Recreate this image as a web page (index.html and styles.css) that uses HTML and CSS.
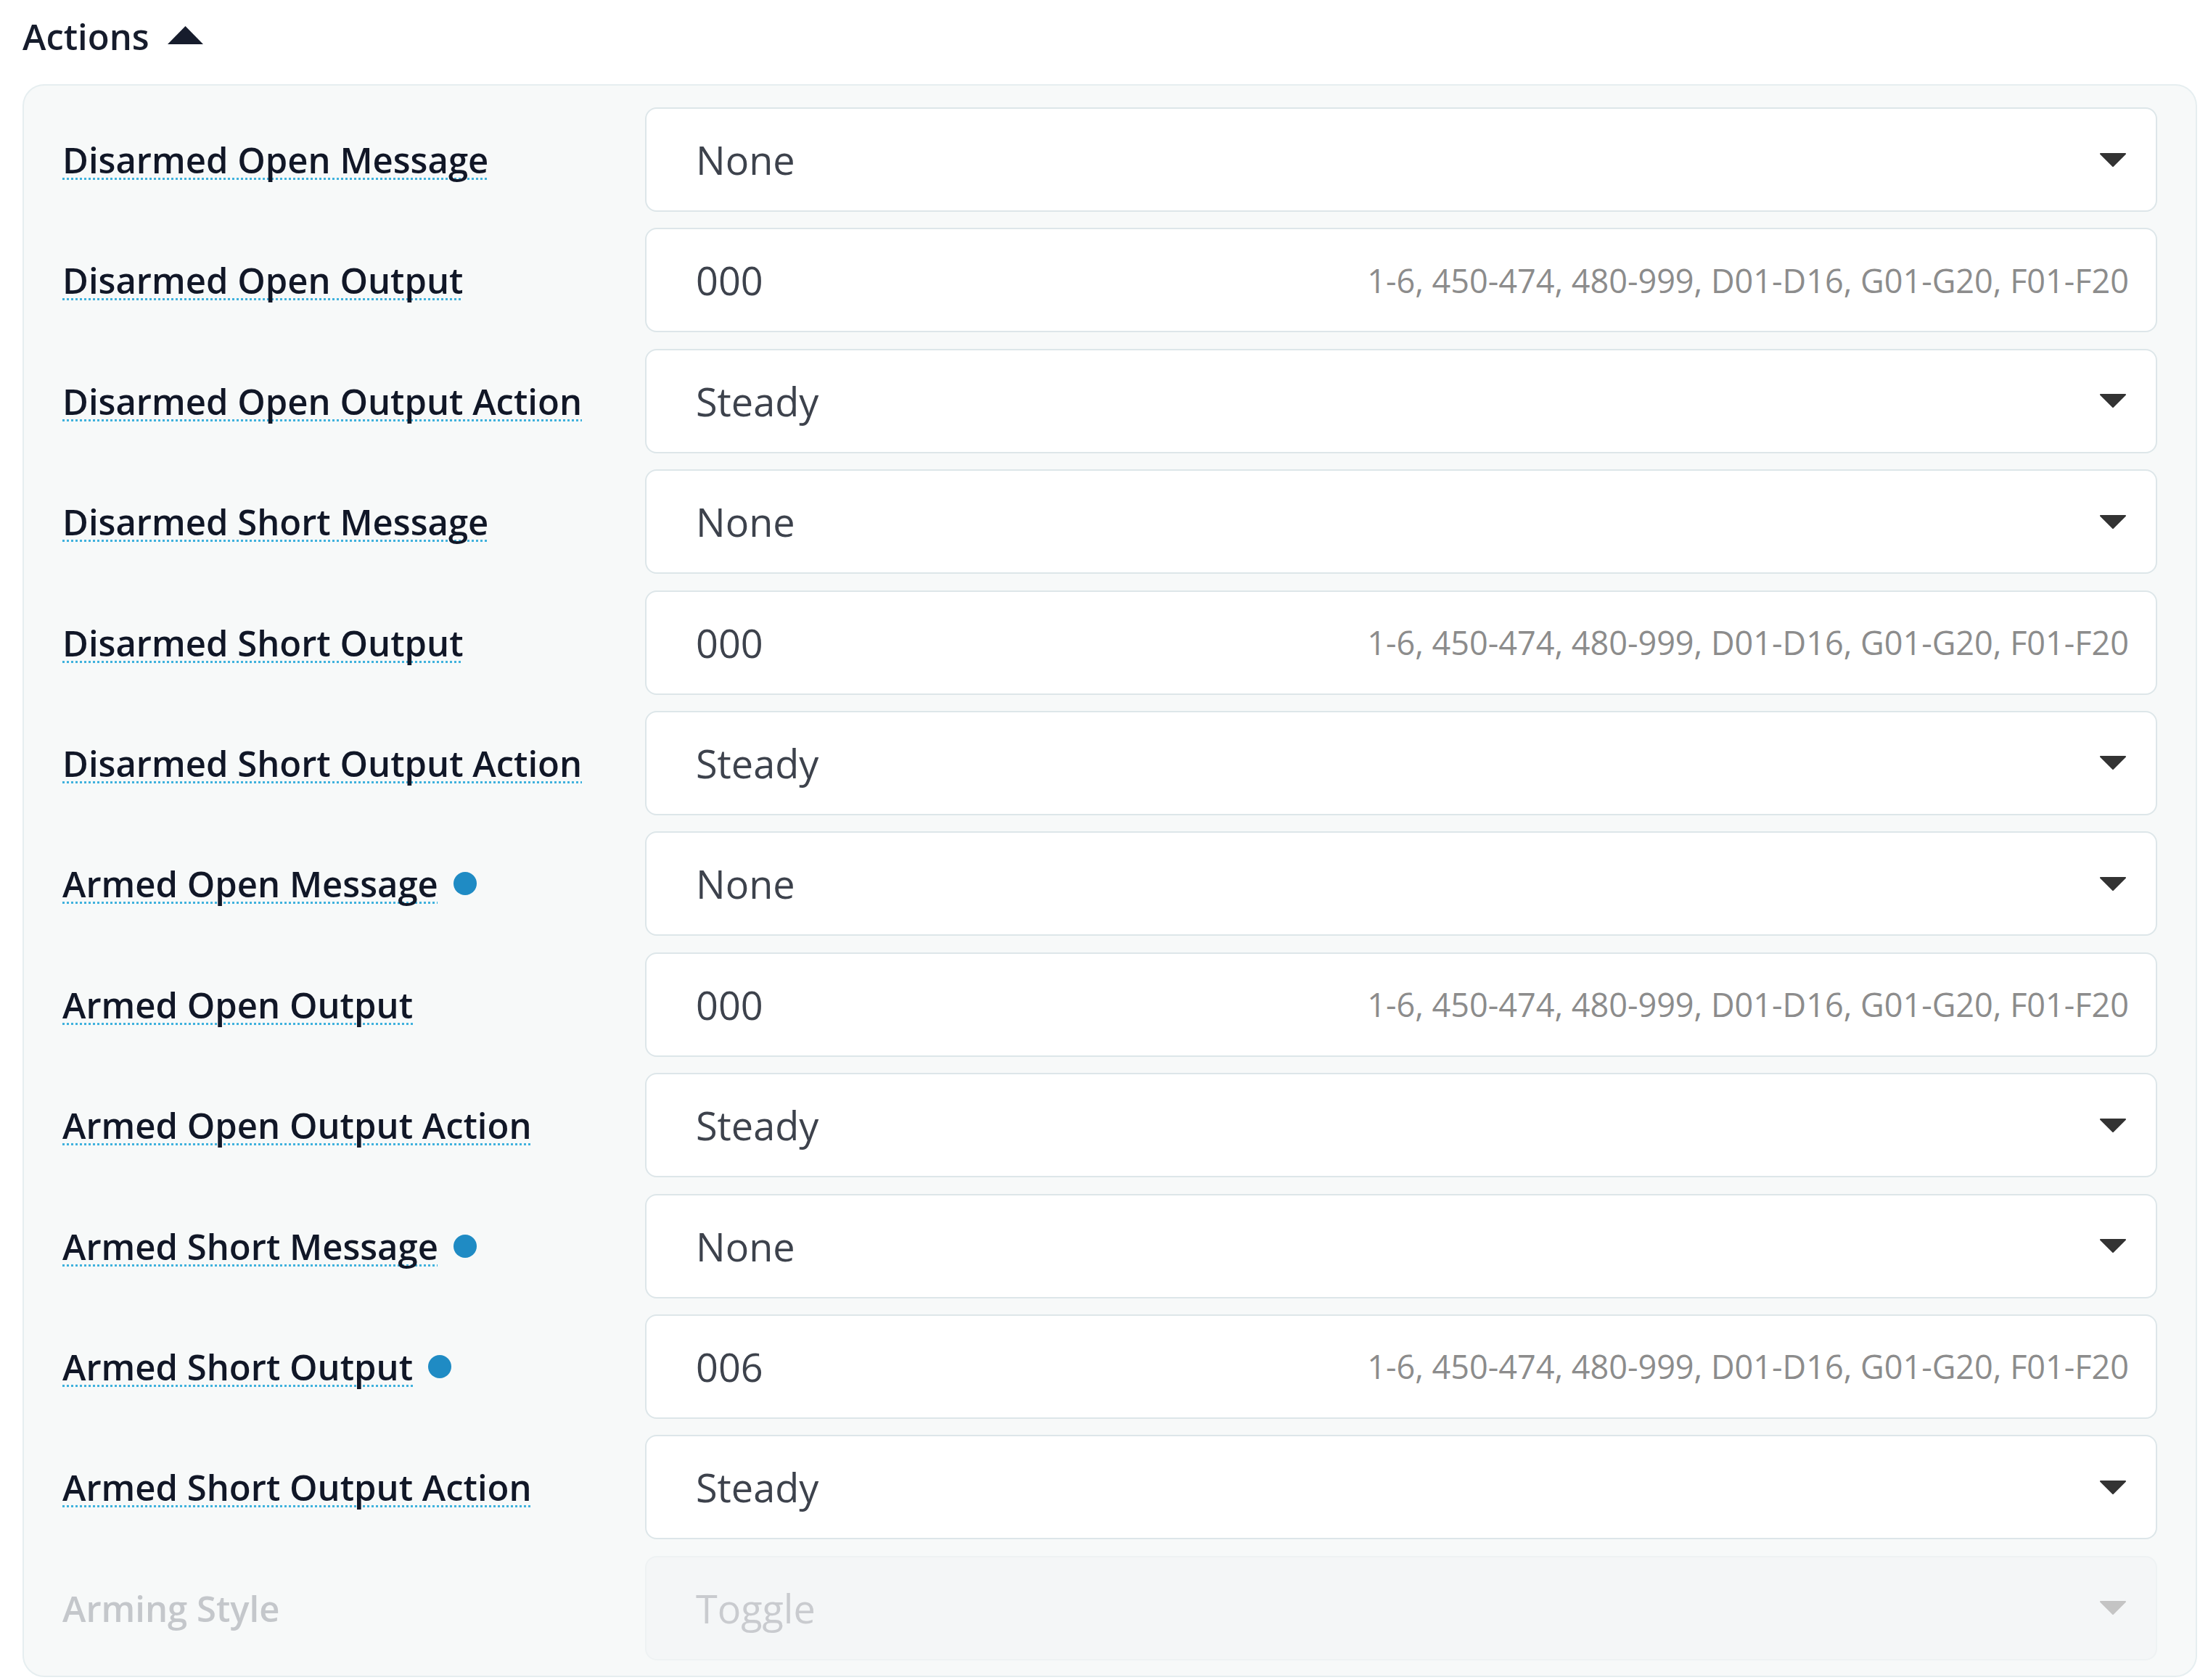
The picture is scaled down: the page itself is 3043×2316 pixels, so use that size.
FILE: index.html
```html
<!DOCTYPE html>
<html lang="en">
<head>
    <meta charset="UTF-8">
    <meta name="viewport" content="width=device-width, initial-scale=1.0">
    <title>Actions</title>
    <link rel="stylesheet" href="styles.css">
</head>
<body>
    <div class="page">
        <h2 class="section-title">Actions
            <svg class="caret-up" width="49" height="25" viewBox="0 0 49 25"><path d="M24.5 0 L49 25 H0 Z" fill="#161c2c"/></svg>
        </h2>
        <div class="panel">
            <div class="field">
                <span class="field-label"><span class="hint">Disarmed Open Message</span></span>
                <div class="control select"><span class="value">None</span>
                    <svg class="arrow" width="36" height="19" viewBox="0 0 36 19"><path d="M1 1 H35 L18 18 Z" stroke-linejoin="round" stroke-width="2"/></svg>
                </div>
            </div>
            <div class="field">
                <span class="field-label"><span class="hint">Disarmed Open Output</span></span>
                <div class="control text"><span class="value">000</span><span class="placeholder">1-6, 450-474, 480-999, D01-D16, G01-G20, F01-F20</span></div>
            </div>
            <div class="field">
                <span class="field-label"><span class="hint">Disarmed Open Output Action</span></span>
                <div class="control select"><span class="value">Steady</span>
                    <svg class="arrow" width="36" height="19" viewBox="0 0 36 19"><path d="M1 1 H35 L18 18 Z" stroke-linejoin="round" stroke-width="2"/></svg>
                </div>
            </div>
            <div class="field">
                <span class="field-label"><span class="hint">Disarmed Short Message</span></span>
                <div class="control select"><span class="value">None</span>
                    <svg class="arrow" width="36" height="19" viewBox="0 0 36 19"><path d="M1 1 H35 L18 18 Z" stroke-linejoin="round" stroke-width="2"/></svg>
                </div>
            </div>
            <div class="field">
                <span class="field-label"><span class="hint">Disarmed Short Output</span></span>
                <div class="control text"><span class="value">000</span><span class="placeholder">1-6, 450-474, 480-999, D01-D16, G01-G20, F01-F20</span></div>
            </div>
            <div class="field">
                <span class="field-label"><span class="hint">Disarmed Short Output Action</span></span>
                <div class="control select"><span class="value">Steady</span>
                    <svg class="arrow" width="36" height="19" viewBox="0 0 36 19"><path d="M1 1 H35 L18 18 Z" stroke-linejoin="round" stroke-width="2"/></svg>
                </div>
            </div>
            <div class="field">
                <span class="field-label"><span class="hint">Armed Open Message</span><span class="dot"></span></span>
                <div class="control select"><span class="value">None</span>
                    <svg class="arrow" width="36" height="19" viewBox="0 0 36 19"><path d="M1 1 H35 L18 18 Z" stroke-linejoin="round" stroke-width="2"/></svg>
                </div>
            </div>
            <div class="field">
                <span class="field-label"><span class="hint">Armed Open Output</span></span>
                <div class="control text"><span class="value">000</span><span class="placeholder">1-6, 450-474, 480-999, D01-D16, G01-G20, F01-F20</span></div>
            </div>
            <div class="field">
                <span class="field-label"><span class="hint">Armed Open Output Action</span></span>
                <div class="control select"><span class="value">Steady</span>
                    <svg class="arrow" width="36" height="19" viewBox="0 0 36 19"><path d="M1 1 H35 L18 18 Z" stroke-linejoin="round" stroke-width="2"/></svg>
                </div>
            </div>
            <div class="field">
                <span class="field-label"><span class="hint">Armed Short Message</span><span class="dot"></span></span>
                <div class="control select"><span class="value">None</span>
                    <svg class="arrow" width="36" height="19" viewBox="0 0 36 19"><path d="M1 1 H35 L18 18 Z" stroke-linejoin="round" stroke-width="2"/></svg>
                </div>
            </div>
            <div class="field">
                <span class="field-label"><span class="hint">Armed Short Output</span><span class="dot"></span></span>
                <div class="control text"><span class="value">006</span><span class="placeholder">1-6, 450-474, 480-999, D01-D16, G01-G20, F01-F20</span></div>
            </div>
            <div class="field">
                <span class="field-label"><span class="hint">Armed Short Output Action</span></span>
                <div class="control select"><span class="value">Steady</span>
                    <svg class="arrow" width="36" height="19" viewBox="0 0 36 19"><path d="M1 1 H35 L18 18 Z" stroke-linejoin="round" stroke-width="2"/></svg>
                </div>
            </div>
            <div class="field disabled">
                <span class="field-label">Arming Style</span>
                <div class="control select"><span class="value">Toggle</span>
                    <svg class="arrow" width="36" height="19" viewBox="0 0 36 19"><path d="M1 1 H35 L18 18 Z" stroke-linejoin="round" stroke-width="2"/></svg>
                </div>
            </div>
        </div>
    </div>
</body>
</html>
```

FILE: styles.css
```css
*,
*::after,
*::before {
    box-sizing: border-box;
}
body {
    margin: 0;
    background: #fff;
    font-family: "Open Sans", "Noto Sans", sans-serif;
    color: #161c2c;
}
.page {
    padding: 0 15px 0 31px;
}
.section-title {
    margin: 16px 0 0;
    font-size: 49px;
    font-weight: 600;
    line-height: 68px;
    display: flex;
    align-items: center;
    gap: 25px;
}
.caret-up {
    position: relative;
    top: -2px;
}
.panel {
    margin-top: 32px;
    padding: 30px 53px 21px 53px;
    background: #f7f9f9;
    border: 2px solid #e6eef0;
    border-radius: 30px;
    display: flex;
    flex-direction: column;
    gap: 22.4px;
}
.field {
    display: flex;
    align-items: center;
}
.field-label {
    flex: 0 0 803px;
    display: flex;
    align-items: center;
    font-size: 49px;
    font-weight: 600;
    line-height: 68px;
    color: #111727;
}
.hint {
    text-decoration: underline dotted #3fb1dd;
    text-decoration-thickness: 3px;
    text-underline-offset: 6px;
    text-decoration-skip-ink: none;
}
.dot {
    width: 32px;
    height: 32px;
    margin-left: 21px;
    border-radius: 50%;
    background: #1f8bc4;
}
.control {
    flex: 1;
    height: 144px;
    display: flex;
    align-items: center;
    padding: 0 41px 0 68px;
    background: #fff;
    border: 2px solid #dde6e9;
    border-radius: 16px;
}
.control .value {
    flex: 1;
    font-size: 54px;
    color: #3d424c;
}
.control.text {
    padding-right: 37px;
}
.placeholder {
    font-size: 45px;
    color: #8c8c8c;
}
.arrow path {
    fill: #333;
    stroke: #333;
}
.disabled .field-label {
    color: #c4c7cb;
}
.disabled .control {
    background: #f4f6f7;
    border-color: #eef2f3;
}
.disabled .control .value {
    color: #c9cbcf;
}
.disabled .arrow path {
    fill: #c4c4c4;
    stroke: #c4c4c4;
}
```
